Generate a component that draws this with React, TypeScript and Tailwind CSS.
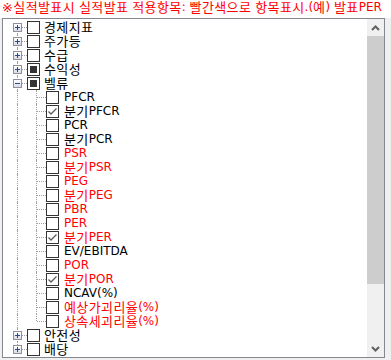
import React from "react";

type CheckState = "off" | "on" | "mixed";

type Node = {
  label: string;
  red?: boolean;
  state?: CheckState;
  open?: boolean;
  children?: Node[];
};

const tree: Node[] = [
  { label: "경제지표" },
  { label: "주가등" },
  { label: "수급" },
  { label: "수익성", state: "mixed" },
  {
    label: "벨류",
    state: "mixed",
    open: true,
    children: [
      { label: "PFCR" },
      { label: "분기PFCR", state: "on" },
      { label: "PCR" },
      { label: "분기PCR" },
      { label: "PSR", red: true },
      { label: "분기PSR", red: true },
      { label: "PEG", red: true },
      { label: "분기PEG", red: true },
      { label: "PBR", red: true },
      { label: "PER", red: true },
      { label: "분기PER", red: true, state: "on" },
      { label: "EV/EBITDA" },
      { label: "POR", red: true },
      { label: "분기POR", red: true, state: "on" },
      { label: "NCAV(%)" },
      { label: "예상가괴리율(%)", red: true },
      { label: "상속세괴리율(%)", red: true },
    ],
  },
  { label: "안전성" },
  { label: "배당" },
];

const font = { fontFamily: '"DejaVu Sans", "Noto Sans CJK KR", sans-serif' };

// hangul runs get a slightly bigger size so they fill the 12px cell like Gulim
const Txt = ({ text }: { text: string }) => (
  <>
    {text.split(/([\uac00-\ud7a3※]+)/).map((part, i) =>
      /[\uac00-\ud7a3※]/.test(part) ? (
        <span key={i} className="relative top-[1px] text-[13px] tracking-[0.4px]">
          {part}
        </span>
      ) : (
        <span key={i}>{part}</span>
      )
    )}
  </>
);

// checkbox drawn like the classic win32 tree checkbox
const Check = ({ state = "off" }: { state?: CheckState }) => (
  <div className="relative w-[13px] h-[13px] border border-[#333333] bg-white shrink-0">
    {state === "mixed" && <div className="absolute left-[2px] top-[2px] w-[7px] h-[7px] bg-[#333333]" />}
    {state === "on" && (
      <svg className="absolute left-0 top-0" width="11" height="11" viewBox="0 0 11 11">
        <path d="M1.5 5.5 L4 8 L9.5 2.5" fill="none" stroke="#5a5a5a" strokeWidth="1.3" />
      </svg>
    )}
  </div>
);

// small +/- expander box
const Expander = ({ open }: { open?: boolean }) => (
  <div className="relative w-[9px] h-[9px] border border-[#8f8f9f] bg-gradient-to-b from-white to-[#d8dce4] shrink-0">
    <div className="absolute left-[1px] top-[3px] w-[5px] h-px bg-[#2a4a8a]" />
    {!open && <div className="absolute left-[3px] top-[1px] w-px h-[5px] bg-[#2a4a8a]" />}
  </div>
);

const dots = "border-dotted border-[#a0a0a0]";

const RootRow = ({ node, first, last }: { node: Node; first: boolean; last: boolean }) => (
  <div className="relative h-[14px] flex items-center">
    {/* vertical root line */}
    <div
      className={`absolute left-[14px] w-0 border-l ${dots} ${first ? "top-[7px]" : "top-0"} ${last ? "h-[7px]" : "bottom-0"}`}
    />
    {/* horizontal stub */}
    <div className={`absolute left-[15px] top-[7px] w-[9px] h-0 border-t ${dots}`} />
    {node.open && <div className={`absolute left-[33px] top-[10px] bottom-0 w-0 border-l ${dots}`} />}
    <div className="relative ml-[10px] mr-[5px]">
      <Expander open={node.open} />
    </div>
    <div className="relative">
      <Check state={node.state} />
    </div>
    <span className="ml-[4px] text-[12px] leading-[14px] text-black whitespace-nowrap" style={font}>
      <Txt text={node.label} />
    </span>
  </div>
);

const ChildRow = ({ node, last }: { node: Node; last: boolean }) => (
  <div className="relative h-[14px] flex items-center">
    <div className={`absolute left-[14px] top-0 bottom-0 w-0 border-l ${dots}`} />
    <div className={`absolute left-[33px] top-0 w-0 border-l ${dots} ${last ? "h-[7px]" : "bottom-0"}`} />
    <div className={`absolute left-[34px] top-[7px] w-[9px] h-0 border-t ${dots}`} />
    <div className="relative ml-[43px]">
      <Check state={node.state} />
    </div>
    <span
      className={`ml-[5px] text-[12px] leading-[14px] whitespace-nowrap ${node.red ? "text-[#ff0000]" : "text-black"}`}
      style={font}
    >
      <Txt text={node.label} />
    </span>
  </div>
);

const Chevron = ({ up }: { up?: boolean }) => (
  <svg width="9" height="6" viewBox="0 0 9 6">
    <path d={up ? "M1 5 L4.5 1.5 L8 5" : "M1 1 L4.5 4.5 L8 1"} fill="none" stroke="#606060" strokeWidth="2" />
  </svg>
);

export default function App() {
  return (
    <div className="w-[391px] h-[360px] bg-[#f0f0f0] overflow-hidden">
      <div className="h-[18px] bg-white pl-[2px] text-[12px] leading-[14px] text-[#ff0000] whitespace-nowrap" style={font}>
        <Txt text="※실적발표시 실적발표 적용항목: 빨간색으로 항목표시.(예) 발표PER" />
      </div>
      <div className="ml-[2px] w-[383px] h-[340px] border border-[#828790] bg-white flex">
        <div className="flex-1 pt-px">
          {tree.map((node, i) => (
            <React.Fragment key={node.label}>
              <RootRow node={node} first={i === 0} last={i === tree.length - 1} />
              {node.open &&
                node.children?.map((c, j) => (
                  <ChildRow key={c.label} node={c} last={j === node.children!.length - 1} />
                ))}
            </React.Fragment>
          ))}
        </div>
        <div className="w-[17px] bg-[#f0f0f0] flex flex-col">
          <div className="h-[17px] flex items-center justify-center">
            <Chevron up />
          </div>
          <div className="h-[248px] bg-[#cdcdcd]" />
          <div className="flex-1" />
          <div className="h-[17px] flex items-center justify-center">
            <Chevron />
          </div>
        </div>
      </div>
    </div>
  );
}
